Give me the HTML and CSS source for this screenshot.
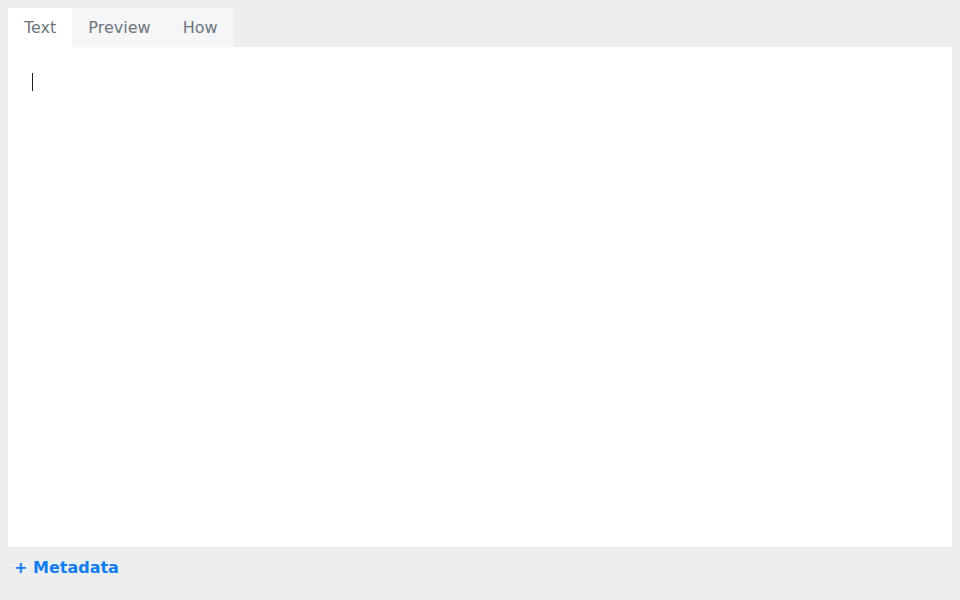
FILE: index.html
```html
<!DOCTYPE html>
<html>
<head>
<meta charset="utf-8">
<link rel="stylesheet" href="styles.css">
</head>
<body>
<div class="tabs">
  <div class="tab active">Text</div>
  <div class="tab">Preview</div>
  <div class="tab">How</div>
</div>
<div class="editor"><span class="caret"></span></div>
<div class="meta">+ Metadata</div>
</body>
</html>
```
FILE: styles.css
```css
html, body {
  background: #eceef0;
}
body {
  margin: 8px;
  font-family: "DejaVu Sans", sans-serif;
  font-size: 16px;
}
.tabs {
  display: flex;
}
.tab {
  padding: 8px 16px;
  line-height: 23px;
  color: #6c757d;
  background: #f4f6f8;
}
.tab.active {
  background: #ffffff;
}
.editor {
  background: #ffffff;
  height: 500px;
  padding: 26px 24px;
  box-sizing: border-box;
}
.caret {
  display: block;
  width: 1px;
  height: 18px;
  background: #222;
}
.meta {
  margin-top: 9px;
  padding-left: 6px;
  line-height: 24px;
  color: #127cf2;
  font-weight: bold;
}
```
